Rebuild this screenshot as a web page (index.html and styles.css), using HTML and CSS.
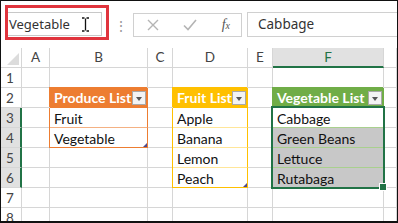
FILE: index.html
```html
<!DOCTYPE html>
<html lang="en">
<head>
    <meta charset="UTF-8">
    <title>Dependent lists</title>
    <link rel="stylesheet" href="styles.css">
</head>
<body>
    <div class="ventana">
        <!-- Barra de formulas -->
        <div class="barra">
            <div class="marca-roja">
                <div class="cuadro-nombre">
                    <span>Vegetable</span>
                    <svg class="cursor" width="9" height="15" viewBox="0 0 9 15">
                        <path d="M1 1h2.5M5.5 1H8M4.5 1.5v12M1 14h2.5M5.5 14H8" stroke="#111" stroke-width="1.3" fill="none"/>
                    </svg>
                </div>
            </div>
            <div class="puntos">⋮</div>
            <div class="botones">
                <svg width="12" height="12" viewBox="0 0 12 12"><path d="M1 1l10 10M11 1L1 11" stroke="#b4b4b4" stroke-width="1.4"/></svg>
                <svg width="14" height="12" viewBox="0 0 14 12"><path d="M1 6.5l4 4L13 1" stroke="#b4b4b4" stroke-width="1.6" fill="none"/></svg>
                <span class="fx">f<small>x</small></span>
            </div>
            <div class="entrada">Cabbage</div>
        </div>

        <!-- Hoja -->
        <div class="hoja">
            <div class="cab esquina"><span class="tri"></span></div>
            <div class="cab">A</div>
            <div class="cab">B</div>
            <div class="cab">C</div>
            <div class="cab">D</div>
            <div class="cab">E</div>
            <div class="cab activa">F</div>
            <div class="cab"></div>

            <!-- fila 1 -->
            <div class="num">1</div>
            <div class="celda"></div><div class="celda"></div><div class="celda"></div>
            <div class="celda"></div><div class="celda"></div><div class="celda"></div><div class="celda"></div>

            <!-- fila 2 -->
            <div class="num">2</div>
            <div class="celda"></div>
            <div class="celda titulo naranja">Produce List<span class="filtro"></span></div>
            <div class="celda"></div>
            <div class="celda titulo oro">Fruit List<span class="filtro"></span></div>
            <div class="celda"></div>
            <div class="celda titulo verde">Vegetable List<span class="filtro"></span></div>
            <div class="celda"></div>

            <!-- fila 3 -->
            <div class="num sel-num">3</div>
            <div class="celda"></div>
            <div class="celda t-naranja">Fruit</div>
            <div class="celda"></div>
            <div class="celda t-oro">Apple</div>
            <div class="celda"></div>
            <div class="celda t-verde activa-celda">Cabbage
                <div class="seleccion"><span class="tirador"></span></div>
            </div>
            <div class="celda"></div>

            <!-- fila 4 -->
            <div class="num sel-num">4</div>
            <div class="celda"></div>
            <div class="celda t-naranja ultima">Vegetable<span class="esquina-tabla"></span></div>
            <div class="celda"></div>
            <div class="celda t-oro">Banana</div>
            <div class="celda"></div>
            <div class="celda t-verde gris">Green Beans</div>
            <div class="celda"></div>

            <!-- fila 5 -->
            <div class="num sel-num">5</div>
            <div class="celda"></div><div class="celda"></div><div class="celda"></div>
            <div class="celda t-oro">Lemon</div>
            <div class="celda"></div>
            <div class="celda t-verde gris">Lettuce</div>
            <div class="celda"></div>

            <!-- fila 6 -->
            <div class="num sel-num">6</div>
            <div class="celda"></div><div class="celda"></div><div class="celda"></div>
            <div class="celda t-oro ultima">Peach<span class="esquina-tabla"></span></div>
            <div class="celda"></div>
            <div class="celda t-verde gris ultima">Rutabaga</div>
            <div class="celda"></div>

            <!-- fila 7 -->
            <div class="num">7</div>
            <div class="celda"></div><div class="celda"></div><div class="celda"></div>
            <div class="celda"></div><div class="celda"></div><div class="celda"></div><div class="celda"></div>

            <!-- fila 8 -->
            <div class="num">8</div>
            <div class="celda"></div><div class="celda"></div><div class="celda"></div>
            <div class="celda"></div><div class="celda"></div><div class="celda"></div><div class="celda"></div>
        </div>
    </div>
</body>
</html>
```

FILE: styles.css
```css
/* Cuerpo */
body {
    margin: 0;
    background: #fff;
}

/* Marco negro de la captura */
.ventana {
    width: 398px;
    height: 223px;
    box-sizing: border-box;
    border: 1px solid #111;
    border-bottom-width: 2px;
    overflow: hidden;
    background: #fff;
}

/* Barra de formulas */
.barra {
    height: 47px;
    box-sizing: border-box;
    padding: 4px 0 0 4px;
    display: flex;
    align-items: flex-start;
    font-family: "Noto Sans", "Open Sans", sans-serif;
    font-size: 13px;
    color: #333;
}

.marca-roja {
    width: 104px;
    height: 35px;
    box-sizing: border-box;
    border: 3px solid #e0343d;
    padding: 4px 4px 1px 0;
}

.cuadro-nombre {
    height: 100%;
    box-sizing: border-box;
    border: 1px solid #c8c8c8;
    border-left: none;
    display: flex;
    align-items: center;
    padding-left: 1px;
}

.cursor {
    margin-left: 11px;
}

.puntos {
    width: 24px;
    text-align: center;
    color: #999;
    font-size: 14px;
    line-height: 16px;
    padding-top: 13px;
}

.botones {
    margin-top: 8px;
    width: 109px;
    height: 24px;
    box-sizing: border-box;
    border: 1px solid #d0d0d0;
    display: flex;
    align-items: center;
    justify-content: space-between;
    padding: 0 11px 0 13px;
}

.fx {
    font-family: "Liberation Serif", serif;
    font-style: italic;
    font-size: 14px;
    color: #555;
}

.fx small {
    font-size: 10px;
}

.entrada {
    margin: 7px 0 0 5px;
    flex: 1;
    height: 25px;
    box-sizing: border-box;
    border: 1px solid #d0d0d0;
    border-right: none;
    padding-left: 10px;
    line-height: 23px;
    font-size: 13.5px;
}

/* Hoja de calculo */
.hoja {
    display: grid;
    grid-template-columns: 21px 28px 98px 25px 75px 25px 111px 1fr;
    grid-auto-rows: 20px;
    font-family: Lato, "Liberation Sans", sans-serif;
    font-size: 14px;
    color: #111;
}

.hoja > div {
    box-sizing: border-box;
    border-right: 1px solid #d6d6d6;
    border-bottom: 1px solid #d6d6d6;
}

.cab {
    text-align: center;
    color: #444;
    line-height: 19px;
    font-size: 13.5px;
}

.cab.activa {
    background: #e1e1e1;
    border-bottom: 2px solid #217346 !important;
    color: #217346;
}

.esquina {
    position: relative;
}

.tri {
    position: absolute;
    right: 2px;
    bottom: 2px;
    width: 0;
    height: 0;
    border-left: 12px solid transparent;
    border-bottom: 12px solid #dcdcdc;
}

.num {
    padding-left: 5px;
    color: #444;
    line-height: 20px;
    font-size: 13.5px;
}

.sel-num {
    background: #e1e1e1;
    border-right: 2px solid #217346 !important;
}

.celda {
    position: relative;
    padding-left: 4px;
    line-height: 21px;
    white-space: nowrap;
}

/* Encabezados de tabla */
.titulo {
    color: #fff;
    font-weight: bold;
    display: flex;
    align-items: center;
    padding-left: 4px;
    line-height: 19px;
}

.naranja { background: #ed7d31; border-color: #ed7d31 !important; box-shadow: -1px -1px 0 #ed7d31; }
.oro { background: #ffc000; border-color: #ffc000 !important; box-shadow: -1px -1px 0 #ffc000; }
.verde { background: #70ad47; border-color: #70ad47 !important; box-shadow: -1px -1px 0 #70ad47; }

.filtro {
    margin-left: auto;
    margin-right: 1px;
    width: 14px;
    height: 14px;
    box-sizing: border-box;
    border: 1px solid #a8a8a8;
    background: #f3f3f3;
    position: relative;
}

.filtro::after {
    content: "";
    position: absolute;
    left: 3px;
    top: 5px;
    border-left: 3.5px solid transparent;
    border-right: 3.5px solid transparent;
    border-top: 4px solid #555;
}

/* Filas de tabla */
.t-naranja { border-right-color: #ed7d31 !important; border-bottom-color: #f4b183 !important; box-shadow: -1px 0 0 #ed7d31; }
.t-oro { border-right-color: #ffc000 !important; border-bottom-color: #ffe699 !important; box-shadow: -1px 0 0 #ffc000; }
.t-verde { border-right-color: #70ad47 !important; border-bottom-color: #a9d08e !important; box-shadow: -1px 0 0 #70ad47; }

.t-naranja.ultima { border-bottom-color: #ed7d31 !important; }
.t-oro.ultima { border-bottom-color: #ffc000 !important; }
.t-verde.ultima { border-bottom-color: #70ad47 !important; }

.gris {
    background: #c8c8c8;
}

.esquina-tabla {
    position: absolute;
    right: 0;
    bottom: 0;
    width: 0;
    height: 0;
    border-left: 4px solid transparent;
    border-bottom: 4px solid #4f4a8a;
}

/* Seleccion F3:F6 */
.seleccion {
    position: absolute;
    top: -2px;
    left: -2px;
    width: 114px;
    height: 83px;
    box-sizing: border-box;
    border: 2px solid #217346;
    z-index: 5;
}

.tirador {
    position: absolute;
    right: -4px;
    bottom: -4px;
    width: 6px;
    height: 6px;
    background: #217346;
    border: 1px solid #fff;
}
```
